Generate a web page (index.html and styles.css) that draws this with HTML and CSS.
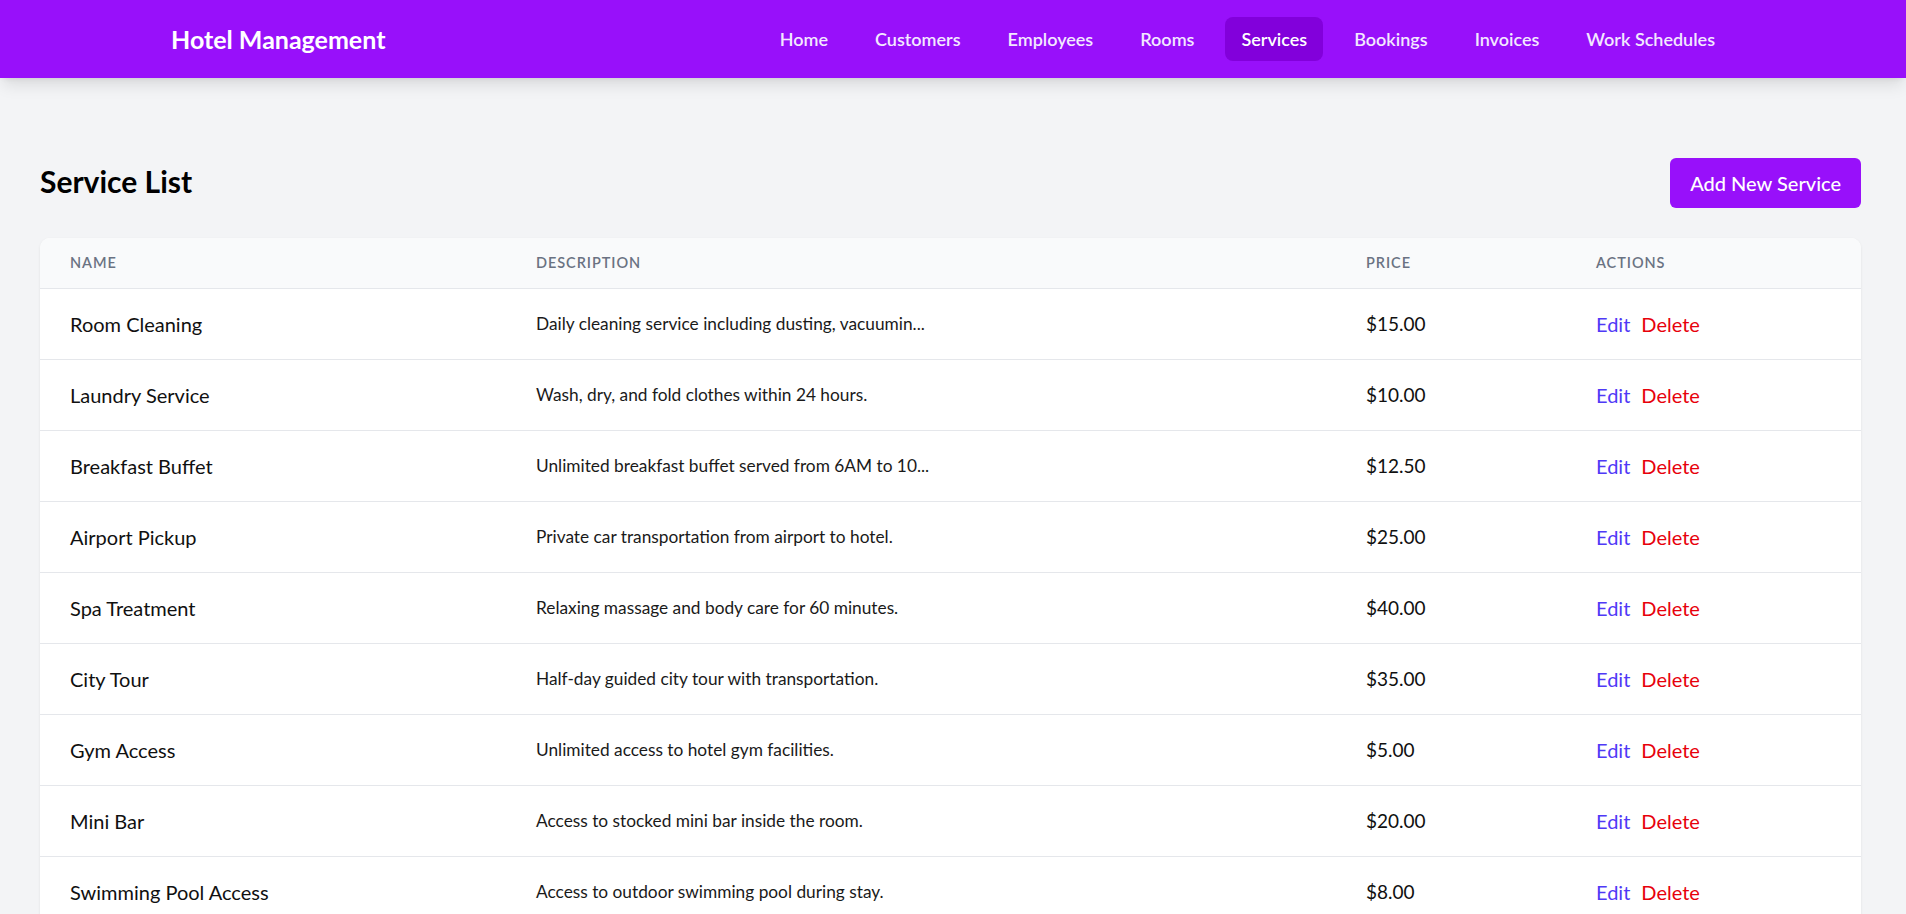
FILE: index.html
```html
<!DOCTYPE html>
<html lang="en">
<head>
<meta charset="utf-8">
<title>Hotel Management - Services</title>
<link rel="stylesheet" href="styles.css">
</head>
<body>
<nav class="navbar">
  <div class="brand">Hotel Management</div>
  <ul class="nav-links">
    <li><a class="nav-link" href="#">Home</a></li>
    <li><a class="nav-link" href="#">Customers</a></li>
    <li><a class="nav-link" href="#">Employees</a></li>
    <li><a class="nav-link" href="#">Rooms</a></li>
    <li><a class="nav-link active" href="#">Services</a></li>
    <li><a class="nav-link" href="#">Bookings</a></li>
    <li><a class="nav-link" href="#">Invoices</a></li>
    <li><a class="nav-link" href="#">Work Schedules</a></li>
  </ul>
</nav>
<main class="page">
  <div class="page-header">
    <h1 class="page-title">Service List</h1>
    <button class="btn-primary" type="button">Add New Service</button>
  </div>
  <div class="table-card">
    <table class="data-table">
      <colgroup>
        <col class="col-name">
        <col class="col-desc">
        <col class="col-price">
        <col class="col-actions">
      </colgroup>
      <thead>
        <tr>
          <th>Name</th>
          <th>Description</th>
          <th>Price</th>
          <th>Actions</th>
        </tr>
      </thead>
      <tbody>
        <tr>
          <td class="cell-name">Room Cleaning</td>
          <td class="cell-desc">Daily cleaning service including dusting, vacuumin...</td>
          <td class="cell-price">$15.00</td>
          <td class="cell-actions"><a class="link-edit" href="#">Edit</a><a class="link-delete" href="#">Delete</a></td>
        </tr>
        <tr>
          <td class="cell-name">Laundry Service</td>
          <td class="cell-desc">Wash, dry, and fold clothes within 24 hours.</td>
          <td class="cell-price">$10.00</td>
          <td class="cell-actions"><a class="link-edit" href="#">Edit</a><a class="link-delete" href="#">Delete</a></td>
        </tr>
        <tr>
          <td class="cell-name">Breakfast Buffet</td>
          <td class="cell-desc">Unlimited breakfast buffet served from 6AM to 10...</td>
          <td class="cell-price">$12.50</td>
          <td class="cell-actions"><a class="link-edit" href="#">Edit</a><a class="link-delete" href="#">Delete</a></td>
        </tr>
        <tr>
          <td class="cell-name">Airport Pickup</td>
          <td class="cell-desc">Private car transportation from airport to hotel.</td>
          <td class="cell-price">$25.00</td>
          <td class="cell-actions"><a class="link-edit" href="#">Edit</a><a class="link-delete" href="#">Delete</a></td>
        </tr>
        <tr>
          <td class="cell-name">Spa Treatment</td>
          <td class="cell-desc">Relaxing massage and body care for 60 minutes.</td>
          <td class="cell-price">$40.00</td>
          <td class="cell-actions"><a class="link-edit" href="#">Edit</a><a class="link-delete" href="#">Delete</a></td>
        </tr>
        <tr>
          <td class="cell-name">City Tour</td>
          <td class="cell-desc">Half-day guided city tour with transportation.</td>
          <td class="cell-price">$35.00</td>
          <td class="cell-actions"><a class="link-edit" href="#">Edit</a><a class="link-delete" href="#">Delete</a></td>
        </tr>
        <tr>
          <td class="cell-name">Gym Access</td>
          <td class="cell-desc">Unlimited access to hotel gym facilities.</td>
          <td class="cell-price">$5.00</td>
          <td class="cell-actions"><a class="link-edit" href="#">Edit</a><a class="link-delete" href="#">Delete</a></td>
        </tr>
        <tr>
          <td class="cell-name">Mini Bar</td>
          <td class="cell-desc">Access to stocked mini bar inside the room.</td>
          <td class="cell-price">$20.00</td>
          <td class="cell-actions"><a class="link-edit" href="#">Edit</a><a class="link-delete" href="#">Delete</a></td>
        </tr>
        <tr>
          <td class="cell-name">Swimming Pool Access</td>
          <td class="cell-desc">Access to outdoor swimming pool during stay.</td>
          <td class="cell-price">$8.00</td>
          <td class="cell-actions"><a class="link-edit" href="#">Edit</a><a class="link-delete" href="#">Delete</a></td>
        </tr>
      </tbody>
    </table>
  </div>
</main>
</body>
</html>
```

FILE: styles.css
```css
* {
  box-sizing: border-box;
}

html, body {
  margin: 0;
  padding: 0;
}

body {
  background: #f3f4f6;
  color: #101010;
  font-family: "Lato", "Liberation Sans", sans-serif;
}

/* Navbar */
.navbar {
  height: 78px;
  background: #9810fa;
  display: flex;
  align-items: center;
  justify-content: space-between;
  padding: 0 175px 0 171px;
  box-shadow: 0 10px 15px -3px rgba(0, 0, 0, 0.1), 0 4px 6px -4px rgba(0, 0, 0, 0.1);
  position: relative;
  z-index: 1;
}

.brand {
  color: #ffffff;
  font-size: 25px;
  font-weight: 700;
  line-height: 32px;
}

.nav-links {
  list-style: none;
  margin: 0;
  padding: 0;
  display: flex;
  align-items: center;
  gap: 15px;
}

.nav-link {
  display: block;
  padding: 8px 16px;
  border-radius: 8px;
  font-size: 18px;
  line-height: 28px;
  font-weight: 600;
  color: #f3e8ff;
  text-decoration: none;
}

.nav-link.active {
  background: #8200db;
  color: #ffffff;
}

/* Page */
.page {
  padding: 80px 45px 40px 40px;
}

.page-header {
  display: flex;
  align-items: center;
  justify-content: space-between;
  margin-bottom: 30px;
}

.page-title {
  margin: 0;
  padding-bottom: 4px;
  font-size: 30px;
  line-height: 36px;
  font-weight: 700;
  color: #000000;
}

.btn-primary {
  background: #9810fa;
  color: #ffffff;
  border: none;
  border-radius: 6px;
  padding: 11px 20px;
  font-family: inherit;
  font-size: 20px;
  line-height: 28px;
  font-weight: 500;
  cursor: pointer;
}

/* Table */
.table-card {
  background: #ffffff;
  border-radius: 10px;
  overflow: hidden;
  box-shadow: 0 1px 3px 0 rgba(0, 0, 0, 0.08), 0 1px 2px -1px rgba(0, 0, 0, 0.06);
}

.data-table {
  width: 100%;
  border-collapse: collapse;
  table-layout: fixed;
}

.col-name { width: 466px; }
.col-desc { width: 830px; }
.col-price { width: 230px; }
.col-actions { width: auto; }

.data-table thead tr {
  background: #f9fafb;
  border-bottom: 1px solid #e5e7eb;
}

.data-table th {
  text-align: left;
  padding: 15px 30px;
  font-size: 14.5px;
  line-height: 20px;
  font-weight: 600;
  letter-spacing: 0.065em;
  text-transform: uppercase;
  color: #6a7282;
}

.data-table tbody tr {
  border-bottom: 1px solid #e5e7eb;
}

.data-table td {
  padding: 21px 30px;
  line-height: 28px;
  white-space: nowrap;
}

.cell-name {
  font-size: 20px;
  color: #101010;
}

.cell-desc {
  font-size: 17.3px;
  color: #1a1a1a;
}

.cell-price {
  font-size: 19px;
  color: #101010;
}

.cell-actions {
  font-size: 20px;
}

.link-edit {
  color: #4f39f6;
  text-decoration: none;
  margin-right: 11px;
}

.link-delete {
  color: #e7000b;
  text-decoration: none;
}
```
